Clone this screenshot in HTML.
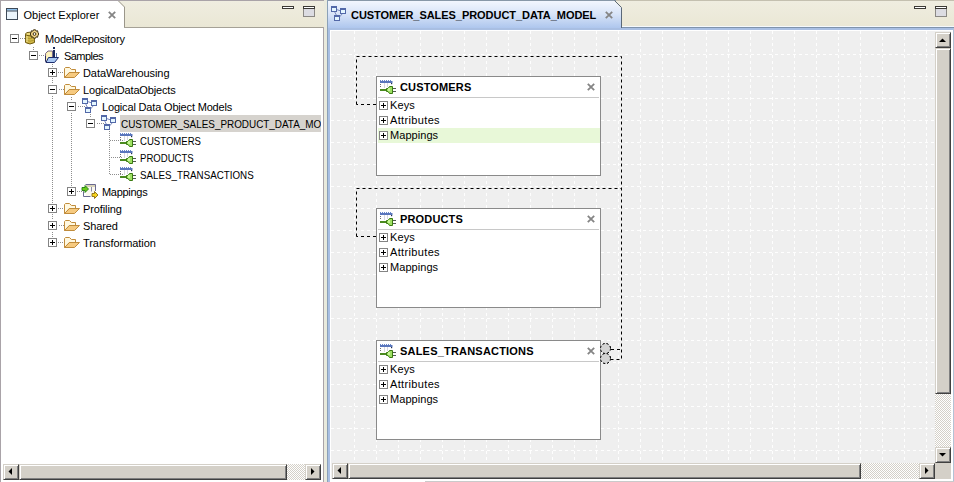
<!DOCTYPE html><html><head><meta charset="utf-8"><style>
*{margin:0;padding:0;box-sizing:border-box}
html,body{width:954px;height:482px;overflow:hidden;background:#ECE9D8;font-family:"Liberation Sans",sans-serif;font-size:11px;color:#000;position:relative}
.a{position:absolute}
svg{overflow:visible}
.t{position:absolute;height:17px;line-height:17px;white-space:nowrap}
.bx{position:absolute;width:9px;height:9px;border:1px solid #848484;background:#fff}
.bx:before{content:"";position:absolute;left:1px;top:3px;width:5px;height:1px;background:#000}
.bx.p:after{content:"";position:absolute;left:3px;top:1px;width:1px;height:5px;background:#000}
.ent{position:absolute;width:225px;height:100px;background:#fff;border:1px solid #8A8A8A}
.ttl{position:absolute;left:23px;top:0;height:21px;line-height:21px;font-weight:bold;letter-spacing:-0.1px;white-space:nowrap}
.sep{position:absolute;left:1px;top:20px;width:221px;height:1px;background:#C8C8C8}
.row{position:absolute;left:1px;width:222px;height:15px;line-height:15px;letter-spacing:-0.05px;white-space:nowrap}
.row span{position:absolute;left:12px;top:0}
.rb{position:absolute;left:1px;top:3px;width:9px;height:9px;border:1px solid #848484;background:#fff}
.rb:before{content:"";position:absolute;left:1px;top:3px;width:5px;height:1px;background:#000}
.rb:after{content:"";position:absolute;left:3px;top:1px;width:1px;height:5px;background:#000}
.btn{position:absolute;width:16px;height:16px;background:#D4D0C8;border-top:1px solid #D4D0C8;border-left:1px solid #D4D0C8;border-right:1px solid #404040;border-bottom:1px solid #404040;box-shadow:inset 1px 1px 0 #fff,inset -1px -1px 0 #808080}
.trk{position:absolute;background-color:#fff;background-image:linear-gradient(45deg,#D4D0C8 25%,transparent 25%,transparent 75%,#D4D0C8 75%),linear-gradient(45deg,#D4D0C8 25%,transparent 25%,transparent 75%,#D4D0C8 75%);background-size:2px 2px;background-position:0 0,1px 1px}
</style></head><body>
<svg width="0" height="0" style="position:absolute">
<defs>
<symbol id="i-folder" viewBox="0 0 16 16" overflow="visible">
 <path d="M0.5 13.5 V4.5 L1.5 3.5 H5.5 L7.5 5.5 H11.5 V8.5 H5 Z" fill="#FEF2CC" stroke="#C08C3C"/>
 <path d="M1 12.5 V5 L2 4 H5 L7 6 H11 V8 H5 Z" fill="#FFF8E0"/>
 <path d="M0.5 13.5 L5.5 8.5 H15.5 L10.5 13.5 Z" fill="#F6CA80" stroke="#C08C3C" stroke-linejoin="round"/>
</symbol>
<symbol id="i-model" viewBox="0 0 16 16" overflow="visible">
 <path d="M4.5 3.5 L9 5 M2.5 5.5 L4.5 9.5 M7.5 11 L10.5 7.5" stroke="#7A8AC0" stroke-width="1" fill="none"/>
 <rect x="-0.5" y="0.5" width="5" height="5" fill="#E4F6FF" stroke="#5268A8"/><rect x="-1" y="0" width="6" height="2" fill="#5268A8"/>
 <rect x="8.5" y="2.5" width="5" height="5" fill="#E4F6FF" stroke="#5268A8"/><rect x="8" y="2" width="6" height="2" fill="#5268A8"/>
 <rect x="2.5" y="9.5" width="5" height="5" fill="#E4F6FF" stroke="#5268A8"/><rect x="2" y="9" width="6" height="2" fill="#5268A8"/>
</symbol>
<symbol id="i-ldo" viewBox="0 0 16 16" overflow="visible">
 <rect x="-1" y="2" width="12.5" height="2" fill="#5A76BC"/>
 <path d="M-0.5 1 v1 M1.5 1 v1 M3.5 1 v1 M5.5 1 v1 M7.5 1 v1 M9.5 1 v1" stroke="#6A88CC" stroke-width="1"/>
 <rect x="10" y="4" width="1.2" height="1.2" fill="#203050"/>
 <rect x="-1" y="5" width="1" height="1" fill="#707070"/><rect x="-1" y="7" width="1" height="1" fill="#707070"/>
 <path d="M3.5 4 V9 M6.5 4 V8" stroke="#D8D8E0" stroke-width="1"/>
 <rect x="-1" y="10" width="7" height="2" fill="#4A8A20"/>
 <path d="M5.5 9.5 H7 L8.5 7.5 H11.5 V14.5 H8.5 L7 12.5 H5.5 Z" fill="#9EE064" stroke="#3A7A12" stroke-linejoin="round"/>
 <rect x="7" y="9" width="2" height="3" fill="#C8F898"/>
 <path d="M12 9.5 H15 M12 12.5 H15" stroke="#505A50" stroke-width="1"/>
</symbol>
<symbol id="i-repo" viewBox="0 0 16 16" overflow="visible">
 <path d="M-0.5 4 V12.5 Q4 15.5 8.5 12.5 V4" fill="#D2B848" stroke="#6E5A14"/>
 <ellipse cx="4" cy="4" rx="4.5" ry="1.8" fill="#EEDA7A" stroke="#6E5A14"/>
 <path d="M-0.5 7.5 Q4 10 8.5 7.5 M-0.5 10 Q4 12.5 8.5 10" fill="none" stroke="#B09A30" stroke-width="1"/>
 <path d="M1 6 V12" stroke="#F2E6A0" stroke-width="1"/>
 <g transform="translate(8.5,4)">
  <path d="M-1 -4.2 H1 L1.6 -2.8 L3 -3.3 L3.6 -1.2 L4.2 0 L3.6 1.2 L3 3.3 L1.6 2.8 L1 4.2 H-1 L-1.6 2.8 L-3 3.3 L-3.6 1.2 L-4.2 0 L-3.6 -1.2 L-3 -3.3 L-1.6 -2.8 Z" fill="#F4D88C" stroke="#3E3010" stroke-width="1" stroke-linejoin="round"/>
  <circle r="1.4" fill="#fff" stroke="#3E3010" stroke-width="1"/>
 </g>
</symbol>
<symbol id="i-proj" viewBox="0 0 16 16" overflow="visible">
 <path d="M0.5 14 V6.5 L3 4 H7.5 V10" fill="#F6E8A8" stroke="#7A6A8A" stroke-width="1"/>
 <path d="M1.5 13 V7 L3.5 5 H6.5 V10 Z" fill="#FFF4C0"/>
 <path d="M3.5 10.5 H13.5 L9.5 15.5 H1 Z" fill="#A9C8F2" stroke="#1E2E6E" stroke-linejoin="round"/>
 <path d="M0.5 9 V14.5 L1.5 15.5" fill="none" stroke="#2A2A5A"/>
 <rect x="8" y="0" width="2" height="2" fill="#1A2A5A"/>
 <rect x="8" y="3" width="2" height="7" fill="#1A2A5A"/>
 <rect x="11" y="6" width="1" height="4" fill="#5A72A8"/>
</symbol>
<symbol id="i-map" viewBox="0 0 16 16" overflow="visible">
 <path d="M2.5 1.5 H12.5 V8" fill="none" stroke="#6A6A90"/>
 <rect x="3" y="2" width="9" height="2" fill="#D8D2B8"/>
 <rect x="3" y="4" width="9" height="9" fill="#FAF8EE"/>
 <path d="M0.5 9 V13.5 H7.5" fill="none" stroke="#6A6A90"/>
 <path d="M8.5 4 V8.5" stroke="#8A8AA8"/>
 <path d="M-1 4.5 H2 L2 2.5 L5.5 6 L2 9.5 L2 7.5 H-1 Z" fill="#6CCC1A" stroke="#1E7A10" stroke-width="0.9" stroke-linejoin="round"/>
 <path d="M9 10.5 H11.5 V8.5 L15 12 L11.5 15.5 V13.5 H9 Z" fill="#F6D41C" stroke="#8A6A10" stroke-width="0.9" stroke-linejoin="round"/>
</symbol>
</defs></svg>
<div class="a" style="left:0;top:0;width:324px;height:482px;background:#fff;border-left:1px solid #A9A3A8;border-top:1px solid #A9A3A8"></div>
<div class="a" style="left:1px;top:1px;width:323px;height:26px;background:linear-gradient(#EFEDE0,#EAE7D5)"></div>
<div class="a" style="left:124px;top:27px;width:200px;height:1px;background:#A5A196"></div>
<div class="a" style="left:323px;top:27px;width:1px;height:455px;background:#A9A3A8"></div>
<div class="a" style="left:324px;top:0;width:3px;height:482px;background:#E9EADD"></div>
<svg class="a" style="left:1px;top:1px" width="124" height="27">
  <path d="M0 0 H117 L123 6 V27 H0 Z" fill="#fff"/>
  <path d="M117.5 0 L123.5 6 V26" fill="none" stroke="#9A968A" stroke-width="1"/>
</svg>
<svg class="a" style="left:6px;top:8px" width="12" height="12">
  <rect x="0.5" y="0.5" width="11" height="11" fill="#EAF4FC" stroke="#3E4A58"/>
  <rect x="1" y="1" width="10" height="1.5" fill="#8EC0EC"/>
  <line x1="1" y1="3" x2="11" y2="3" stroke="#3E4A58"/>
</svg>
<div class="t" style="left:23.5px;top:7px;letter-spacing:0px">Object Explorer</div>
<svg class="a" style="left:108px;top:11px" width="8" height="8"><path d="M0.8 0.8 L7.2 7.2 M7.2 0.8 L0.8 7.2" stroke="#858585" stroke-width="1.8"/></svg>
<svg class="a" style="left:282px;top:6px" width="12" height="3"><rect x="0.5" y="0.5" width="11" height="2" fill="#fff" stroke="#3C3A36"/></svg><svg class="a" style="left:303px;top:6px" width="12" height="11"><rect x="0.5" y="2.5" width="11" height="8" fill="#DCDCE2" stroke="#8A8884"/><rect x="0.5" y="0.5" width="11" height="2" fill="#fff" stroke="#3C3A36"/></svg>
<svg class="a" style="left:0;top:0" width="324" height="482" fill="#8E8E8E"><rect x="20" y="38" width="1" height="1"/><rect x="22" y="38" width="1" height="1"/><rect x="24" y="38" width="1" height="1"/><rect x="26" y="38" width="1" height="1"/><rect x="39" y="55" width="1" height="1"/><rect x="41" y="55" width="1" height="1"/><rect x="43" y="55" width="1" height="1"/><rect x="45" y="55" width="1" height="1"/><rect x="58" y="72" width="1" height="1"/><rect x="60" y="72" width="1" height="1"/><rect x="62" y="72" width="1" height="1"/><rect x="64" y="72" width="1" height="1"/><rect x="59" y="89" width="1" height="1"/><rect x="61" y="89" width="1" height="1"/><rect x="63" y="89" width="1" height="1"/><rect x="65" y="89" width="1" height="1"/><rect x="78" y="106" width="1" height="1"/><rect x="80" y="106" width="1" height="1"/><rect x="82" y="106" width="1" height="1"/><rect x="84" y="106" width="1" height="1"/><rect x="97" y="123" width="1" height="1"/><rect x="99" y="123" width="1" height="1"/><rect x="101" y="123" width="1" height="1"/><rect x="103" y="123" width="1" height="1"/><rect x="110" y="140" width="1" height="1"/><rect x="112" y="140" width="1" height="1"/><rect x="114" y="140" width="1" height="1"/><rect x="116" y="140" width="1" height="1"/><rect x="118" y="140" width="1" height="1"/><rect x="120" y="140" width="1" height="1"/><rect x="122" y="140" width="1" height="1"/><rect x="111" y="157" width="1" height="1"/><rect x="113" y="157" width="1" height="1"/><rect x="115" y="157" width="1" height="1"/><rect x="117" y="157" width="1" height="1"/><rect x="119" y="157" width="1" height="1"/><rect x="121" y="157" width="1" height="1"/><rect x="110" y="174" width="1" height="1"/><rect x="112" y="174" width="1" height="1"/><rect x="114" y="174" width="1" height="1"/><rect x="116" y="174" width="1" height="1"/><rect x="118" y="174" width="1" height="1"/><rect x="120" y="174" width="1" height="1"/><rect x="122" y="174" width="1" height="1"/><rect x="77" y="191" width="1" height="1"/><rect x="79" y="191" width="1" height="1"/><rect x="81" y="191" width="1" height="1"/><rect x="83" y="191" width="1" height="1"/><rect x="58" y="208" width="1" height="1"/><rect x="60" y="208" width="1" height="1"/><rect x="62" y="208" width="1" height="1"/><rect x="64" y="208" width="1" height="1"/><rect x="59" y="225" width="1" height="1"/><rect x="61" y="225" width="1" height="1"/><rect x="63" y="225" width="1" height="1"/><rect x="65" y="225" width="1" height="1"/><rect x="58" y="242" width="1" height="1"/><rect x="60" y="242" width="1" height="1"/><rect x="62" y="242" width="1" height="1"/><rect x="64" y="242" width="1" height="1"/><rect x="33" y="47" width="1" height="1"/><rect x="33" y="49" width="1" height="1"/><rect x="52" y="64" width="1" height="1"/><rect x="52" y="66" width="1" height="1"/><rect x="52" y="78" width="1" height="1"/><rect x="52" y="80" width="1" height="1"/><rect x="52" y="82" width="1" height="1"/><rect x="52" y="96" width="1" height="1"/><rect x="52" y="98" width="1" height="1"/><rect x="52" y="100" width="1" height="1"/><rect x="52" y="102" width="1" height="1"/><rect x="52" y="104" width="1" height="1"/><rect x="52" y="106" width="1" height="1"/><rect x="52" y="108" width="1" height="1"/><rect x="52" y="110" width="1" height="1"/><rect x="52" y="112" width="1" height="1"/><rect x="52" y="114" width="1" height="1"/><rect x="52" y="116" width="1" height="1"/><rect x="52" y="118" width="1" height="1"/><rect x="52" y="120" width="1" height="1"/><rect x="52" y="122" width="1" height="1"/><rect x="52" y="124" width="1" height="1"/><rect x="52" y="126" width="1" height="1"/><rect x="52" y="128" width="1" height="1"/><rect x="52" y="130" width="1" height="1"/><rect x="52" y="132" width="1" height="1"/><rect x="52" y="134" width="1" height="1"/><rect x="52" y="136" width="1" height="1"/><rect x="52" y="138" width="1" height="1"/><rect x="52" y="140" width="1" height="1"/><rect x="52" y="142" width="1" height="1"/><rect x="52" y="144" width="1" height="1"/><rect x="52" y="146" width="1" height="1"/><rect x="52" y="148" width="1" height="1"/><rect x="52" y="150" width="1" height="1"/><rect x="52" y="152" width="1" height="1"/><rect x="52" y="154" width="1" height="1"/><rect x="52" y="156" width="1" height="1"/><rect x="52" y="158" width="1" height="1"/><rect x="52" y="160" width="1" height="1"/><rect x="52" y="162" width="1" height="1"/><rect x="52" y="164" width="1" height="1"/><rect x="52" y="166" width="1" height="1"/><rect x="52" y="168" width="1" height="1"/><rect x="52" y="170" width="1" height="1"/><rect x="52" y="172" width="1" height="1"/><rect x="52" y="174" width="1" height="1"/><rect x="52" y="176" width="1" height="1"/><rect x="52" y="178" width="1" height="1"/><rect x="52" y="180" width="1" height="1"/><rect x="52" y="182" width="1" height="1"/><rect x="52" y="184" width="1" height="1"/><rect x="52" y="186" width="1" height="1"/><rect x="52" y="188" width="1" height="1"/><rect x="52" y="190" width="1" height="1"/><rect x="52" y="192" width="1" height="1"/><rect x="52" y="194" width="1" height="1"/><rect x="52" y="196" width="1" height="1"/><rect x="52" y="198" width="1" height="1"/><rect x="52" y="200" width="1" height="1"/><rect x="52" y="202" width="1" height="1"/><rect x="52" y="214" width="1" height="1"/><rect x="52" y="216" width="1" height="1"/><rect x="52" y="218" width="1" height="1"/><rect x="52" y="232" width="1" height="1"/><rect x="52" y="234" width="1" height="1"/><rect x="52" y="236" width="1" height="1"/><rect x="71" y="97" width="1" height="1"/><rect x="71" y="99" width="1" height="1"/><rect x="71" y="113" width="1" height="1"/><rect x="71" y="115" width="1" height="1"/><rect x="71" y="117" width="1" height="1"/><rect x="71" y="119" width="1" height="1"/><rect x="71" y="121" width="1" height="1"/><rect x="71" y="123" width="1" height="1"/><rect x="71" y="125" width="1" height="1"/><rect x="71" y="127" width="1" height="1"/><rect x="71" y="129" width="1" height="1"/><rect x="71" y="131" width="1" height="1"/><rect x="71" y="133" width="1" height="1"/><rect x="71" y="135" width="1" height="1"/><rect x="71" y="137" width="1" height="1"/><rect x="71" y="139" width="1" height="1"/><rect x="71" y="141" width="1" height="1"/><rect x="71" y="143" width="1" height="1"/><rect x="71" y="145" width="1" height="1"/><rect x="71" y="147" width="1" height="1"/><rect x="71" y="149" width="1" height="1"/><rect x="71" y="151" width="1" height="1"/><rect x="71" y="153" width="1" height="1"/><rect x="71" y="155" width="1" height="1"/><rect x="71" y="157" width="1" height="1"/><rect x="71" y="159" width="1" height="1"/><rect x="71" y="161" width="1" height="1"/><rect x="71" y="163" width="1" height="1"/><rect x="71" y="165" width="1" height="1"/><rect x="71" y="167" width="1" height="1"/><rect x="71" y="169" width="1" height="1"/><rect x="71" y="171" width="1" height="1"/><rect x="71" y="173" width="1" height="1"/><rect x="71" y="175" width="1" height="1"/><rect x="71" y="177" width="1" height="1"/><rect x="71" y="179" width="1" height="1"/><rect x="71" y="181" width="1" height="1"/><rect x="71" y="183" width="1" height="1"/><rect x="71" y="185" width="1" height="1"/><rect x="90" y="114" width="1" height="1"/><rect x="90" y="116" width="1" height="1"/><rect x="109" y="131" width="1" height="1"/><rect x="109" y="133" width="1" height="1"/><rect x="109" y="135" width="1" height="1"/><rect x="109" y="137" width="1" height="1"/><rect x="109" y="139" width="1" height="1"/><rect x="109" y="141" width="1" height="1"/><rect x="109" y="143" width="1" height="1"/><rect x="109" y="145" width="1" height="1"/><rect x="109" y="147" width="1" height="1"/><rect x="109" y="149" width="1" height="1"/><rect x="109" y="151" width="1" height="1"/><rect x="109" y="153" width="1" height="1"/><rect x="109" y="155" width="1" height="1"/><rect x="109" y="157" width="1" height="1"/><rect x="109" y="159" width="1" height="1"/><rect x="109" y="161" width="1" height="1"/><rect x="109" y="163" width="1" height="1"/><rect x="109" y="165" width="1" height="1"/><rect x="109" y="167" width="1" height="1"/><rect x="109" y="169" width="1" height="1"/><rect x="109" y="171" width="1" height="1"/><rect x="109" y="173" width="1" height="1"/></svg>
<div class="a" style="left:120px;top:115px;width:201px;height:17px;background:#D6D3CE"></div>
<div class="bx" style="left:10px;top:34px"></div>
<svg class="a" style="left:26px;top:30px" width="16" height="16"><use href="#i-repo"/></svg>
<div class="t" style="left:45px;top:31px;width:276px;overflow:hidden"><span style="display:inline-block;transform-origin:0 0;letter-spacing:-0.19px">ModelRepository</span></div>
<div class="bx" style="left:29px;top:51px"></div>
<svg class="a" style="left:45px;top:47px" width="16" height="16"><use href="#i-proj"/></svg>
<div class="t" style="left:64px;top:48px;width:257px;overflow:hidden"><span style="display:inline-block;transform-origin:0 0;letter-spacing:-0.55px">Samples</span></div>
<div class="bx p" style="left:48px;top:68px"></div>
<svg class="a" style="left:64px;top:64px" width="16" height="16"><use href="#i-folder"/></svg>
<div class="t" style="left:83px;top:65px;width:238px;overflow:hidden"><span style="display:inline-block;transform-origin:0 0;letter-spacing:-0.08px">DataWarehousing</span></div>
<div class="bx" style="left:48px;top:85px"></div>
<svg class="a" style="left:64px;top:81px" width="16" height="16"><use href="#i-folder"/></svg>
<div class="t" style="left:83px;top:82px;width:238px;overflow:hidden"><span style="display:inline-block;transform-origin:0 0;letter-spacing:-0.16px">LogicalDataObjects</span></div>
<div class="bx" style="left:67px;top:102px"></div>
<svg class="a" style="left:83px;top:98px" width="16" height="16"><use href="#i-model"/></svg>
<div class="t" style="left:102px;top:99px;width:219px;overflow:hidden"><span style="display:inline-block;transform-origin:0 0;letter-spacing:-0.17px">Logical Data Object Models</span></div>
<div class="bx" style="left:86px;top:119px"></div>
<svg class="a" style="left:102px;top:115px" width="16" height="16"><use href="#i-model"/></svg>
<div class="t" style="left:121px;top:116px;width:200px;overflow:hidden"><span style="display:inline-block;transform-origin:0 0;letter-spacing:0;transform:scaleX(0.9)">CUSTOMER_SALES_PRODUCT_DATA_MODEL</span></div>
<svg class="a" style="left:121px;top:132px" width="16" height="16"><use href="#i-ldo"/></svg>
<div class="t" style="left:140px;top:133px;width:181px;overflow:hidden"><span style="display:inline-block;transform-origin:0 0;letter-spacing:0;transform:scaleX(0.87)">CUSTOMERS</span></div>
<svg class="a" style="left:121px;top:149px" width="16" height="16"><use href="#i-ldo"/></svg>
<div class="t" style="left:140px;top:150px;width:181px;overflow:hidden"><span style="display:inline-block;transform-origin:0 0;letter-spacing:0;transform:scaleX(0.87)">PRODUCTS</span></div>
<svg class="a" style="left:121px;top:166px" width="16" height="16"><use href="#i-ldo"/></svg>
<div class="t" style="left:140px;top:167px;width:181px;overflow:hidden"><span style="display:inline-block;transform-origin:0 0;letter-spacing:0;transform:scaleX(0.89)">SALES_TRANSACTIONS</span></div>
<div class="bx p" style="left:67px;top:187px"></div>
<svg class="a" style="left:83px;top:183px" width="16" height="16"><use href="#i-map"/></svg>
<div class="t" style="left:102px;top:184px;width:219px;overflow:hidden"><span style="display:inline-block;transform-origin:0 0;letter-spacing:-0.29px">Mappings</span></div>
<div class="bx p" style="left:48px;top:204px"></div>
<svg class="a" style="left:64px;top:200px" width="16" height="16"><use href="#i-folder"/></svg>
<div class="t" style="left:83px;top:201px;width:238px;overflow:hidden"><span style="display:inline-block;transform-origin:0 0;letter-spacing:-0.1px">Profiling</span></div>
<div class="bx p" style="left:48px;top:221px"></div>
<svg class="a" style="left:64px;top:217px" width="16" height="16"><use href="#i-folder"/></svg>
<div class="t" style="left:83px;top:218px;width:238px;overflow:hidden"><span style="display:inline-block;transform-origin:0 0;letter-spacing:-0.1px">Shared</span></div>
<div class="bx p" style="left:48px;top:238px"></div>
<svg class="a" style="left:64px;top:234px" width="16" height="16"><use href="#i-folder"/></svg>
<div class="t" style="left:83px;top:235px;width:238px;overflow:hidden"><span style="display:inline-block;transform-origin:0 0;letter-spacing:-0.05px">Transformation</span></div>
<div class="trk" style="left:19px;top:464px;width:286px;height:16px"></div>
<div class="btn" style="left:19px;top:464px;width:268px"></div>
<div class="btn" style="left:3px;top:464px"></div>
<div class="btn" style="left:305px;top:464px"></div>
<svg class="a" style="left:8px;top:468px" width="5" height="8"><path d="M4 0 V7 L0.5 3.5 Z" fill="#000"/></svg>
<svg class="a" style="left:311px;top:468px" width="5" height="8"><path d="M0 0 V7 L3.5 3.5 Z" fill="#000"/></svg>
<div class="a" style="left:327px;top:0;width:627px;height:482px;background:#EFEFEF"></div>
<div class="a" style="left:328px;top:1px;width:626px;height:26px;background:linear-gradient(#EFEDE0,#EAE7D5)"></div>
<div class="a" style="left:327px;top:0;width:627px;height:1px;background:#C4C0B0"></div>
<div class="a" style="left:327px;top:0;width:289px;height:1px;background:#8898A8"></div>
<div class="a" style="left:621px;top:26px;width:333px;height:1px;background:#F4F8FC"></div>
<div class="a" style="left:621px;top:27px;width:333px;height:1px;background:#7F93AC"></div>
<svg class="a" style="left:328px;top:1px" width="294" height="29">
 <defs><linearGradient id="tg" x1="0" y1="0" x2="0" y2="1"><stop offset="0" stop-color="#F2F6FE"/><stop offset="0.45" stop-color="#D8E4F8"/><stop offset="1" stop-color="#A8C2EC"/></linearGradient></defs>
 <path d="M0 0 H286 L293 7 V29 H0 Z" fill="url(#tg)"/>
 <path d="M286.5 -0.5 L293.5 6.5 V27" fill="none" stroke="#5A6878"/>
</svg>
<div class="a" style="left:327px;top:0;width:1px;height:482px;background:#8BA1B8"></div>
<div class="a" style="left:328px;top:28px;width:626px;height:2px;background:#A9BFE3"></div>
<div class="a" style="left:328px;top:28px;width:2px;height:454px;background:#A9BFE3"></div>
<div class="a" style="left:330px;top:30px;width:624px;height:1px;background:#fff"></div>
<div class="a" style="left:330px;top:30px;width:1px;height:452px;background:#fff"></div>
<div class="a" style="left:951px;top:30px;width:2px;height:452px;background:#fff"></div>
<div class="a" style="left:953px;top:28px;width:1px;height:454px;background:#B2C2D6"></div>
<div class="a" style="left:330px;top:479px;width:623px;height:2px;background:#fff"></div>
<div class="a" style="left:330px;top:481px;width:95px;height:1px;background:#fff"></div>
<div class="a" style="left:425px;top:481px;width:529px;height:1px;background:#CACACA"></div>
<svg class="a" style="left:332px;top:6px" width="16" height="16"><use href="#i-model"/></svg>
<div class="t" style="left:351px;top:7px;font-weight:bold;letter-spacing:-0.05px">CUSTOMER_SALES_PRODUCT_DATA_MODEL</div>
<svg class="a" style="left:605px;top:11px" width="8" height="8"><path d="M0.8 0.8 L7.2 7.2 M7.2 0.8 L0.8 7.2" stroke="#858585" stroke-width="1.8"/></svg>
<svg class="a" style="left:914px;top:6px" width="12" height="3"><rect x="0.5" y="0.5" width="11" height="2" fill="#fff" stroke="#3C3A36"/></svg><svg class="a" style="left:935px;top:6px" width="12" height="11"><rect x="0.5" y="2.5" width="11" height="8" fill="#DCDCE2" stroke="#8A8884"/><rect x="0.5" y="0.5" width="11" height="2" fill="#fff" stroke="#3C3A36"/></svg>
<svg class="a" style="left:0;top:0" width="954" height="482"><g stroke="#FFFFFF" stroke-opacity="0.9" stroke-width="1" stroke-dasharray="3 3"><line x1="354.5" y1="31" x2="354.5" y2="463"/><line x1="376.5" y1="31" x2="376.5" y2="463"/><line x1="398.5" y1="31" x2="398.5" y2="463"/><line x1="420.5" y1="31" x2="420.5" y2="463"/><line x1="442.5" y1="31" x2="442.5" y2="463"/><line x1="464.5" y1="31" x2="464.5" y2="463"/><line x1="486.5" y1="31" x2="486.5" y2="463"/><line x1="508.5" y1="31" x2="508.5" y2="463"/><line x1="530.5" y1="31" x2="530.5" y2="463"/><line x1="552.5" y1="31" x2="552.5" y2="463"/><line x1="574.5" y1="31" x2="574.5" y2="463"/><line x1="596.5" y1="31" x2="596.5" y2="463"/><line x1="618.5" y1="31" x2="618.5" y2="463"/><line x1="640.5" y1="31" x2="640.5" y2="463"/><line x1="662.5" y1="31" x2="662.5" y2="463"/><line x1="684.5" y1="31" x2="684.5" y2="463"/><line x1="706.5" y1="31" x2="706.5" y2="463"/><line x1="728.5" y1="31" x2="728.5" y2="463"/><line x1="750.5" y1="31" x2="750.5" y2="463"/><line x1="772.5" y1="31" x2="772.5" y2="463"/><line x1="794.5" y1="31" x2="794.5" y2="463"/><line x1="816.5" y1="31" x2="816.5" y2="463"/><line x1="838.5" y1="31" x2="838.5" y2="463"/><line x1="860.5" y1="31" x2="860.5" y2="463"/><line x1="882.5" y1="31" x2="882.5" y2="463"/><line x1="904.5" y1="31" x2="904.5" y2="463"/><line x1="926.5" y1="31" x2="926.5" y2="463"/><line x1="331" y1="54.5" x2="935" y2="54.5"/><line x1="331" y1="76.5" x2="935" y2="76.5"/><line x1="331" y1="98.5" x2="935" y2="98.5"/><line x1="331" y1="120.5" x2="935" y2="120.5"/><line x1="331" y1="142.5" x2="935" y2="142.5"/><line x1="331" y1="164.5" x2="935" y2="164.5"/><line x1="331" y1="186.5" x2="935" y2="186.5"/><line x1="331" y1="208.5" x2="935" y2="208.5"/><line x1="331" y1="230.5" x2="935" y2="230.5"/><line x1="331" y1="252.5" x2="935" y2="252.5"/><line x1="331" y1="274.5" x2="935" y2="274.5"/><line x1="331" y1="296.5" x2="935" y2="296.5"/><line x1="331" y1="318.5" x2="935" y2="318.5"/><line x1="331" y1="340.5" x2="935" y2="340.5"/><line x1="331" y1="362.5" x2="935" y2="362.5"/><line x1="331" y1="384.5" x2="935" y2="384.5"/><line x1="331" y1="406.5" x2="935" y2="406.5"/><line x1="331" y1="428.5" x2="935" y2="428.5"/><line x1="331" y1="450.5" x2="935" y2="450.5"/></g></svg>
<svg class="a" style="left:0;top:0" width="954" height="482"><g stroke="#000" stroke-width="1" fill="none" stroke-dasharray="3 3">
<path d="M356.5 104.5 V56.5 H621.5 V359.5 H611"/>
<path d="M376 104.5 H356.5"/>
<path d="M356.5 236.5 V188.5 H621.5"/>
<path d="M376 236.5 H356.5"/>
<path d="M611 349.5 H621.5"/>
</g>
<circle cx="605.5" cy="348.5" r="5" fill="#D0D0D0" stroke="#000" stroke-dasharray="2 2"/>
<circle cx="605.5" cy="358.5" r="5" fill="#D0D0D0" stroke="#000" stroke-dasharray="2 2"/>
</svg>
<div class="ent" style="left:376px;top:76px"><svg class="a" style="left:4px;top:2px" width="16" height="16"><use href="#i-ldo"/></svg><div class="ttl" style="letter-spacing:0.15px">CUSTOMERS</div><svg class="a" style="left:210px;top:6px" width="8" height="8"><path d="M0.8 0.8 L7.2 7.2 M7.2 0.8 L0.8 7.2" stroke="#858585" stroke-width="1.8"/></svg><div class="sep"></div><div class="row" style="top:21px;"><div class="rb"></div><span style="letter-spacing:0.1px">Keys</span></div><div class="row" style="top:36px;"><div class="rb"></div><span style="letter-spacing:0.35px">Attributes</span></div><div class="row" style="top:51px;background:#E8F8D8;"><div class="rb"></div><span style="letter-spacing:0.05px">Mappings</span></div></div>
<div class="ent" style="left:376px;top:208px"><svg class="a" style="left:4px;top:2px" width="16" height="16"><use href="#i-ldo"/></svg><div class="ttl" style="letter-spacing:0.15px">PRODUCTS</div><svg class="a" style="left:210px;top:6px" width="8" height="8"><path d="M0.8 0.8 L7.2 7.2 M7.2 0.8 L0.8 7.2" stroke="#858585" stroke-width="1.8"/></svg><div class="sep"></div><div class="row" style="top:21px;"><div class="rb"></div><span style="letter-spacing:0.1px">Keys</span></div><div class="row" style="top:36px;"><div class="rb"></div><span style="letter-spacing:0.35px">Attributes</span></div><div class="row" style="top:51px;"><div class="rb"></div><span style="letter-spacing:0.05px">Mappings</span></div></div>
<div class="ent" style="left:376px;top:340px"><svg class="a" style="left:4px;top:2px" width="16" height="16"><use href="#i-ldo"/></svg><div class="ttl" style="letter-spacing:0.2px">SALES_TRANSACTIONS</div><svg class="a" style="left:210px;top:6px" width="8" height="8"><path d="M0.8 0.8 L7.2 7.2 M7.2 0.8 L0.8 7.2" stroke="#858585" stroke-width="1.8"/></svg><div class="sep"></div><div class="row" style="top:21px;"><div class="rb"></div><span style="letter-spacing:0.1px">Keys</span></div><div class="row" style="top:36px;"><div class="rb"></div><span style="letter-spacing:0.35px">Attributes</span></div><div class="row" style="top:51px;"><div class="rb"></div><span style="letter-spacing:0.05px">Mappings</span></div></div>
<svg class="a" style="left:598px;top:341px" width="14" height="24">
<circle cx="7.5" cy="17.5" r="5" fill="#D4D4D4" stroke="#000" stroke-dasharray="2 2"/>
<circle cx="7.5" cy="7.5" r="5" fill="#D4D4D4" stroke="#000" stroke-dasharray="2 2"/>
</svg>
<div class="trk" style="left:935px;top:48px;width:16px;height:399px"></div>
<div class="btn" style="left:935px;top:48px;height:346px"></div>
<div class="btn" style="left:935px;top:32px"></div>
<div class="btn" style="left:935px;top:447px"></div>
<svg class="a" style="left:939px;top:38px" width="8" height="5"><path d="M0 4 H7 L3.5 0.5 Z" fill="#000"/></svg>
<svg class="a" style="left:939px;top:453px" width="8" height="5"><path d="M0 0 H7 L3.5 3.5 Z" fill="#000"/></svg>
<div class="trk" style="left:348px;top:463px;width:571px;height:16px"></div>
<div class="btn" style="left:348px;top:463px;width:513px"></div>
<div class="btn" style="left:332px;top:463px"></div>
<div class="btn" style="left:919px;top:463px"></div>
<div class="a" style="left:935px;top:463px;width:16px;height:16px;background:#D4D0C8"></div>
<svg class="a" style="left:337px;top:467px" width="5" height="8"><path d="M4 0 V7 L0.5 3.5 Z" fill="#000"/></svg>
<svg class="a" style="left:925px;top:467px" width="5" height="8"><path d="M0 0 V7 L3.5 3.5 Z" fill="#000"/></svg>
</body></html>
